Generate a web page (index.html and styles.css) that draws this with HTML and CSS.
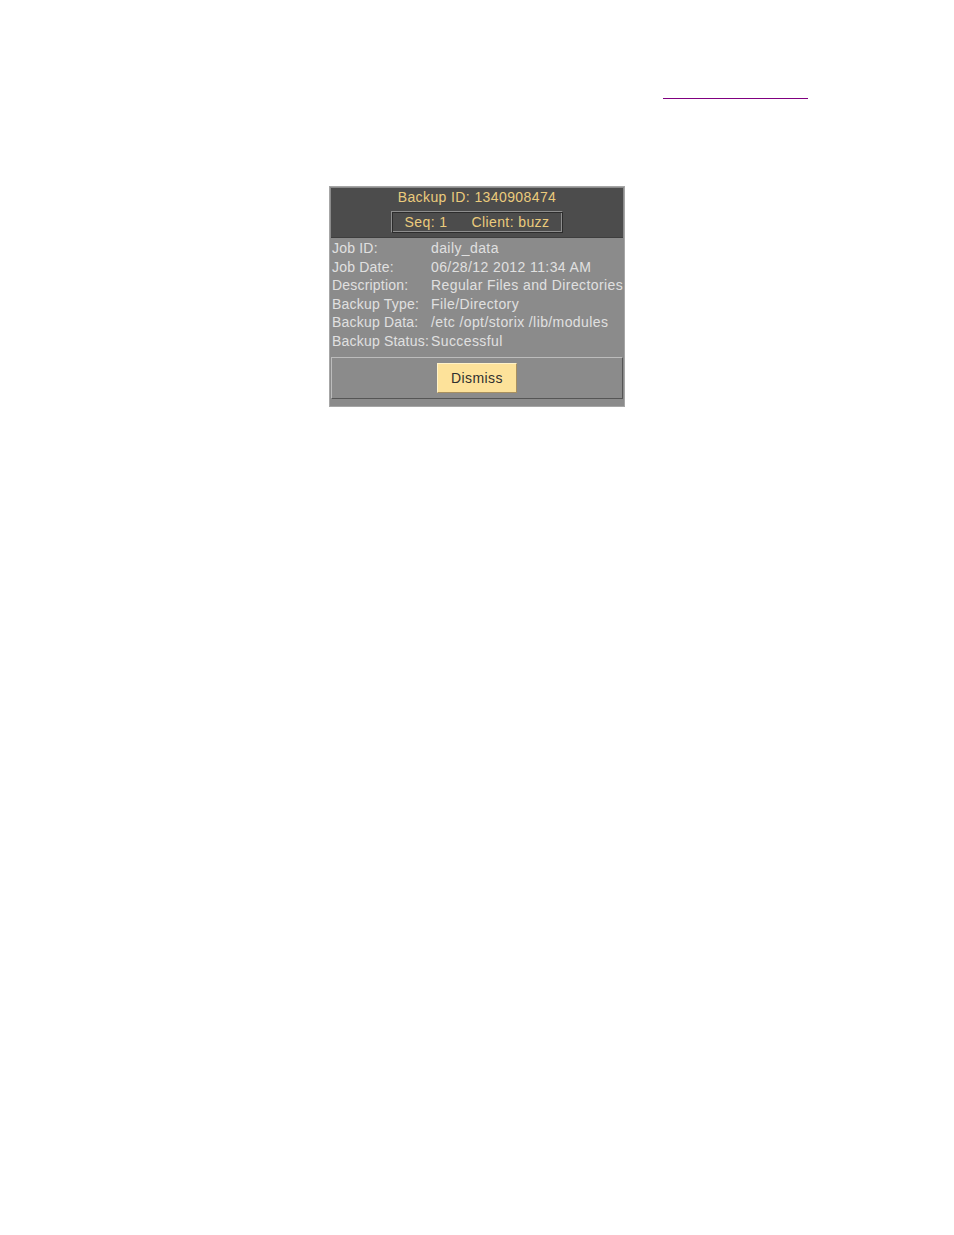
FILE: index.html
```html
<!DOCTYPE html>
<html>
<head>
<meta charset="utf-8">
<link rel="stylesheet" href="styles.css">
</head>
<body>
<div class="topline"></div>
<div class="dialog">
  <div class="header">
    <div class="title">Backup ID: 1340908474</div>
    <div class="seqbox"><span>Seq: 1</span><span>Client: buzz</span></div>
  </div>
  <div class="rows">
    <div class="row"><span class="lbl">Job ID:</span><span class="val">daily_data</span></div>
    <div class="row"><span class="lbl">Job Date:</span><span class="val">06/28/12 2012 11:34 AM</span></div>
    <div class="row"><span class="lbl">Description:</span><span class="val">Regular Files and Directories</span></div>
    <div class="row"><span class="lbl">Backup Type:</span><span class="val">File/Directory</span></div>
    <div class="row"><span class="lbl">Backup Data:</span><span class="val">/etc /opt/storix /lib/modules</span></div>
    <div class="row"><span class="lbl">Backup Status:</span><span class="val">Successful</span></div>
  </div>
  <div class="actions">
    <button class="btn">Dismiss</button>
  </div>
</div>
</body>
</html>
```

FILE: styles.css
```css
html, body {
  margin: 0;
  padding: 0;
  background: #ffffff;
}
body {
  font-family: "Liberation Sans", Arial, sans-serif;
}
.topline {
  margin: 98px 0 0 663px;
  width: 145px;
  height: 1px;
  background: #800080;
}
.dialog {
  margin: 87px auto 0;
  border: 1px solid #a6a6a6;
  background: #8b8b8b;
  padding: 1px;
  box-sizing: content-box;
  display: flex;
  flex-direction: column;
  width: 292px;
  height: 217px;
}
.header {
  background: #4c4c4c;
  border-bottom: 1px solid #3e3e3e;
  height: 49px;
  flex: none;
  display: flex;
  flex-direction: column;
  align-items: center;
}
.title {
  color: #ebcb7c;
  font-size: 14px;
  line-height: 18px;
  letter-spacing: 0.4px;
}
.seqbox {
  margin-top: 5px;
  width: 172px;
  height: 22px;
  box-sizing: border-box;
  border: 1px solid;
  border-color: #8e8e8e #2c2c2c #2c2c2c #8e8e8e;
  box-shadow: inset 1px 1px 0 #2c2c2c, inset -1px -1px 0 #8e8e8e;
  display: flex;
  justify-content: center;
  gap: 24px;
  align-items: center;
  color: #ebcb7c;
  font-size: 14px;
  line-height: 18px;
  letter-spacing: 0.4px;
}
.rows {
  padding-top: 1px;
  display: flex;
  flex-direction: column;
  flex: none;
}
.row {
  display: flex;
  height: 18.6px;
  line-height: 18.6px;
  font-size: 14px;
  color: #e0e0e0;
  white-space: nowrap;
  letter-spacing: 0.4px;
}
.lbl {
  width: 99px;
  padding-left: 1px;
  flex: none;
  letter-spacing: 0.2px;
}
.val {
  flex: none;
}
.actions {
  margin-top: auto;
  margin-bottom: 6px;
  height: 40px;
  flex: none;
  border: 1px solid;
  border-color: #bcbcbc #555555 #555555 #bcbcbc;
  display: flex;
  justify-content: center;
  align-items: center;
}
.btn {
  width: 80px;
  height: 30px;
  background: #fde29a;
  border: 1px solid;
  border-color: #fff2c8 #a89060 #a89060 #fff2c8;
  font-family: "Liberation Sans", Arial, sans-serif;
  font-size: 14px;
  letter-spacing: 0.4px;
  color: #303030;
  padding: 0;
}
```
